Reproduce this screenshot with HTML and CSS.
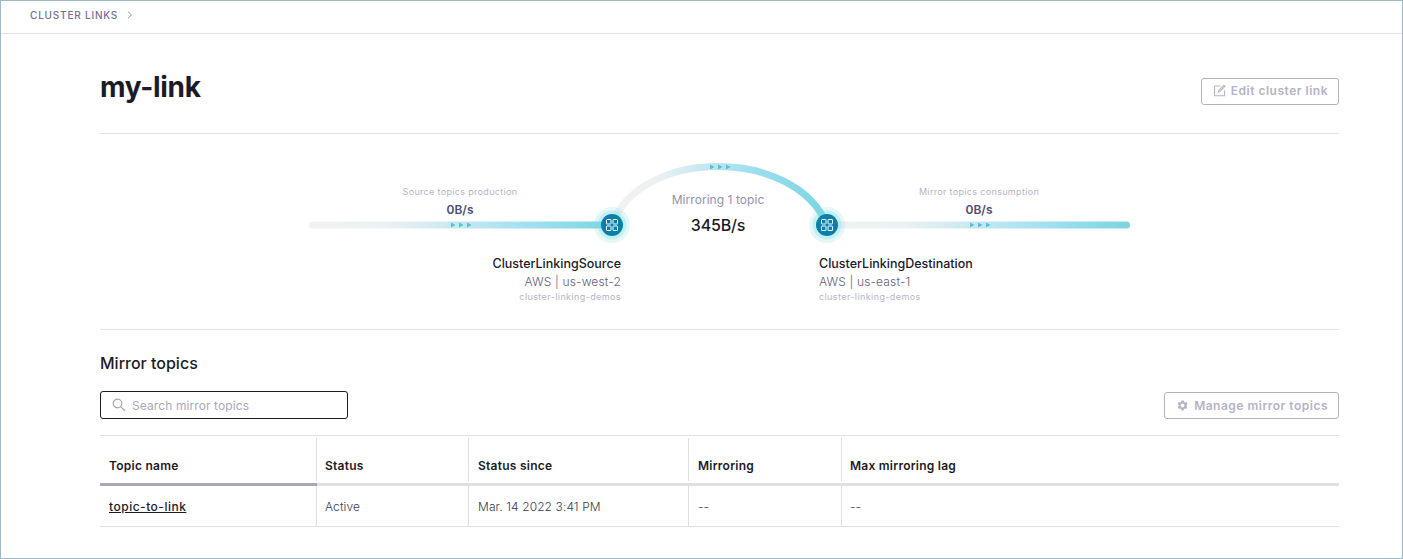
FILE: index.html
```html
<!DOCTYPE html>
<html lang="en">
<head>
  <meta charset="UTF-8">
  <title>my-link</title>
  <link rel="stylesheet" href="styles.css">
</head>
<body>

<div class="frame">
  <div class="crumbs">
    <span class="crumb">CLUSTER LINKS</span>
    <svg class="crumb-arrow" width="6" height="8" viewBox="0 0 6 8"><path d="M1 .7 4.4 4 1 7.3" fill="none" stroke="#9a99ae" stroke-width="1"/></svg>
  </div>

  <main class="content">
    <div class="title-row">
      <h1>my-link</h1>
      <button class="btn edit-btn">
        <svg width="13" height="13" viewBox="0 0 13 13" fill="none" stroke="#b5b4c6" stroke-width="1.1"><path d="M11.5 6.5v5.2h-10V2h6"/><path d="M5.5 8.2l.4-1.9L11 1.2l1 1-5 5.2z"/></svg>
        Edit cluster link
      </button>
    </div>

    <!-- Link diagram -->
    <div class="diagram">
      <svg class="flow" width="1239" height="195" viewBox="100 134 1239 195">
        <defs>
          <linearGradient id="barLeft" gradientUnits="userSpaceOnUse" x1="309" y1="0" x2="612" y2="0">
            <stop offset="0" stop-color="#f1f1f1"/>
            <stop offset="0.25" stop-color="#eef1f2"/>
            <stop offset="0.75" stop-color="#9ddff0"/>
            <stop offset="1" stop-color="#7bd5de"/>
          </linearGradient>
          <linearGradient id="barRight" gradientUnits="userSpaceOnUse" x1="827" y1="0" x2="1130" y2="0">
            <stop offset="0" stop-color="#f1f1f1"/>
            <stop offset="0.25" stop-color="#eef1f2"/>
            <stop offset="0.75" stop-color="#9ddff0"/>
            <stop offset="1" stop-color="#7bd5de"/>
          </linearGradient>
          <linearGradient id="arc" gradientUnits="userSpaceOnUse" x1="612" y1="0" x2="827" y2="0">
            <stop offset="0" stop-color="#f1f1f1"/>
            <stop offset="0.2" stop-color="#eef1f2"/>
            <stop offset="0.65" stop-color="#9ddff0"/>
            <stop offset="1" stop-color="#7bd5de"/>
          </linearGradient>
          <g id="arrows" fill="#4fc3d8">
            <path d="M0-2.5 4.5 0 0 2.5z"/>
            <path d="M8-2.5 12.500 0 8 2.500z"/>
            <path d="M16-2.500 20.500 0 16 2.500z"/>
          </g>
          <g id="node">
            <circle r="18" fill="#7bdde2" fill-opacity=".2"/>
            <circle r="14.500" fill="#7bdde2" fill-opacity=".3"/>
            <circle r="11" fill="#0a7fab"/>
            <g fill="none" stroke="#fff" stroke-width="1">
              <rect x="-5.500" y="-5.500" width="4.500" height="4.500" rx=".5"/>
              <rect x="1" y="-5.500" width="4.500" height="4.500" rx=".5"/>
              <rect x="-5.500" y="1" width="4.500" height="4.500" rx=".5"/>
              <rect x="1" y="1" width="4.500" height="4.500" rx=".5"/>
            </g>
          </g>
        </defs>
        <path d="M312.500 225H612" fill="none" stroke="url(#barLeft)" stroke-width="7" stroke-linecap="round"/>
        <path d="M827 225H1126.500" fill="none" stroke="url(#barRight)" stroke-width="7" stroke-linecap="round"/>
        <path d="M612 225C640 147 795 147 827 225" fill="none" stroke="url(#arc)" stroke-width="7"/>
        <use href="#arrows" x="451" y="225"/>
        <use href="#arrows" x="710" y="167"/>
        <use href="#arrows" x="970" y="225"/>
        <use href="#node" x="612" y="225"/>
        <use href="#node" x="827" y="225"/>
      </svg>

      <div class="rate rate-source">
        <span class="rate-label">Source topics production</span>
        <span class="rate-value">0B/s</span>
      </div>
      <div class="rate rate-mirror">
        <span class="rate-label">Mirror topics consumption</span>
        <span class="rate-value">0B/s</span>
      </div>
      <div class="mirroring">
        <span class="mirroring-label">Mirroring 1 topic</span>
        <span class="mirroring-value">345B/s</span>
      </div>
      <div class="cluster cluster-source">
        <span class="cluster-name">ClusterLinkingSource</span>
        <span class="cluster-region">AWS | us-west-2</span>
        <span class="cluster-env">cluster-linking-demos</span>
      </div>
      <div class="cluster cluster-dest">
        <span class="cluster-name">ClusterLinkingDestination</span>
        <span class="cluster-region">AWS | us-east-1</span>
        <span class="cluster-env">cluster-linking-demos</span>
      </div>
    </div>

    <h2>Mirror topics</h2>

    <div class="toolbar">
      <div class="search">
        <svg width="14" height="14" viewBox="0 0 14 14" fill="none" stroke="#a9a8b8" stroke-width="1.200"><circle cx="5.500" cy="5.500" r="4.300"/><path d="M8.700 8.700 13 13"/></svg>
        <span>Search mirror topics</span>
      </div>
      <button class="btn manage-btn">
        <svg width="13" height="13" viewBox="0 0 24 24" fill="#b5b4c6"><path d="M19.400 13a7.600 7.600 0 0 0 0-2l2.200-1.700-2.200-3.700-2.600 1a7.600 7.600 0 0 0-1.700-1L14.200 2.800H9.800l-.4 2.800a7.600 7.600 0 0 0-1.700 1l-2.600-1-2.200 3.700L5.100 11a7.600 7.600 0 0 0 0 2l-2.200 1.700 2.200 3.700 2.600-1a7.600 7.600 0 0 0 1.700 1l.4 2.800h4.400l.4-2.800a7.600 7.600 0 0 0 1.700-1l2.600 1 2.200-3.700zM12 15.500a3.500 3.500 0 1 1 0-7 3.500 3.500 0 0 1 0 7z"/></svg>
        Manage mirror topics
      </button>
    </div>

    <table class="topics">
      <thead>
        <tr>
          <th class="sorted">Topic name</th>
          <th>Status</th>
          <th>Status since</th>
          <th>Mirroring</th>
          <th>Max mirroring lag</th>
        </tr>
      </thead>
      <tbody>
        <tr>
          <td><a href="#">topic-to-link</a></td>
          <td>Active</td>
          <td>Mar. 14 2022 3:41 PM</td>
          <td>--</td>
          <td>--</td>
        </tr>
      </tbody>
    </table>
  </main>
</div>

</body>
</html>
```

FILE: styles.css
```css
* {
  box-sizing: border-box;
}

html, body {
  margin: 0;
  height: 100%;
}

body {
  font-family: 'Inter', 'Liberation Sans', sans-serif;
  background: #fff;
  color: #1b1b27;
  overflow: hidden;
}

.frame {
  height: 559px;
  border: 1px solid #9bbac8;
}

/* Breadcrumb */
.crumbs {
  height: 33px;
  padding: 0 0 4px 29px;
  border-bottom: 1px solid #e2e2e4;
  display: flex;
  align-items: center;
  gap: 9px;
}

.crumb {
  font-size: 10px;
  font-weight: 500;
  letter-spacing: 0.8px;
  color: #71708f;
}

/* Page content */
.content {
  padding: 0 63px 0 99px;
}

.title-row {
  height: 100px;
  padding-top: 18px;
  border-bottom: 1px solid #e2e2e4;
  display: flex;
  justify-content: space-between;
  align-items: center;
}

h1 {
  margin: 0 0 12px;
  font-size: 28px;
  font-weight: 700;
  letter-spacing: -0.3px;
}

.btn {
  height: 27px;
  padding: 0 10px 0 11px;
  background: #fff;
  border: 1px solid #b3b2c4;
  border-radius: 3px;
  display: flex;
  align-items: center;
  gap: 5px;
  font-family: inherit;
  font-size: 12px;
  font-weight: 600;
  letter-spacing: 0.5px;
  color: #b5b4c6;
}

.edit-btn {
  margin-bottom: 2px;
  padding-bottom: 2px;
}

/* Diagram: everything in here sits on a free canvas */
.diagram {
  position: relative;
  height: 196px;
  border-bottom: 1px solid #e2e2e4;
}

.flow {
  position: absolute;
  left: 0;
  top: 0;
}

.rate, .mirroring, .cluster {
  position: absolute;
  display: flex;
  flex-direction: column;
}

.rate {
  width: 160px;
  top: 52px;
  align-items: center;
}

.rate-source { left: 280px; }
.rate-mirror { left: 799px; }

.rate-label {
  font-size: 9px;
  line-height: 12px;
  letter-spacing: 0.33px;
  color: #b5b4c6;
}

.rate-value {
  margin-top: 4px;
  font-size: 12px;
  line-height: 16px;
  font-weight: 600;
  color: #4d4c6b;
}

.mirroring {
  width: 160px;
  left: 538px;
  top: 58px;
  align-items: center;
}

.mirroring-label {
  font-size: 12px;
  line-height: 16px;
  letter-spacing: 0.05px;
  color: #9291a9;
}

.mirroring-value {
  margin-top: 7px;
  font-size: 16px;
  line-height: 20px;
  font-weight: 500;
  letter-spacing: -0.2px;
  color: #1b1b27;
}

.cluster {
  top: 122px;
  width: 240px;
}

.cluster-source {
  left: 281px;
  align-items: flex-end;
}

.cluster-dest {
  left: 719px;
  align-items: flex-start;
}

.cluster-name {
  font-size: 12.5px;
  line-height: 16px;
  font-weight: 500;
}

.cluster-region {
  margin-top: 2px;
  font-size: 12px;
  line-height: 16px;
  font-weight: 300;
  letter-spacing: 0.15px;
  color: #5f5e7c;
}

.cluster-env {
  font-size: 9px;
  line-height: 14px;
  letter-spacing: 0.4px;
  color: #b5b4c6;
}

/* Mirror topics */
h2 {
  margin: 23px 0 0;
  font-size: 16px;
  line-height: 20px;
  font-weight: 500;
}

.toolbar {
  margin-top: 18px;
  display: flex;
  justify-content: space-between;
  align-items: center;
}

.search {
  width: 248px;
  height: 28px;
  padding-left: 11px;
  border: 1px solid #1b1b27;
  border-radius: 3px;
  display: flex;
  align-items: center;
  gap: 6px;
  font-size: 12px;
  color: #a9a8bd;
  letter-spacing: 0.1px;
}

.topics {
  width: 1239px;
  margin-top: 16px;
  border-collapse: separate;
  border-spacing: 0;
  table-layout: fixed;
  border-top: 1px solid #e2e2e4;
  font-size: 12px;
}

.topics th {
  height: 50px;
  padding: 12px 0 0 9px;
  text-align: left;
  font-weight: 600;
  letter-spacing: 0.25px;
  border-bottom: 3px solid #dfdfe6;
  background: linear-gradient(#dfdfe6, #dfdfe6) right center / 1px calc(100% - 4px) no-repeat;
}

.topics th.sorted {
  border-bottom-color: #a9a8b8;
}

.topics td {
  height: 41px;
  padding: 0 0 0 9px;
  font-weight: 300;
  letter-spacing: 0.1px;
  color: #3c3b52;
  border-bottom: 1px solid #dfdfe6;
  border-right: 1px solid #dfdfe6;
}

.topics th:nth-child(2), .topics td:nth-child(2),
.topics th:nth-child(5), .topics td:nth-child(5) {
  padding-left: 8px;
}

.topics th:last-child {
  background: none;
}

.topics td:last-child {
  border-right: none;
}

.topics th:nth-child(1) { width: 217px; }
.topics th:nth-child(2) { width: 152px; }
.topics th:nth-child(3) { width: 220px; }
.topics th:nth-child(4) { width: 153px; }

.topics a {
  color: #1b1b27;
  font-weight: 500;
  letter-spacing: 0.5px;
}
```
